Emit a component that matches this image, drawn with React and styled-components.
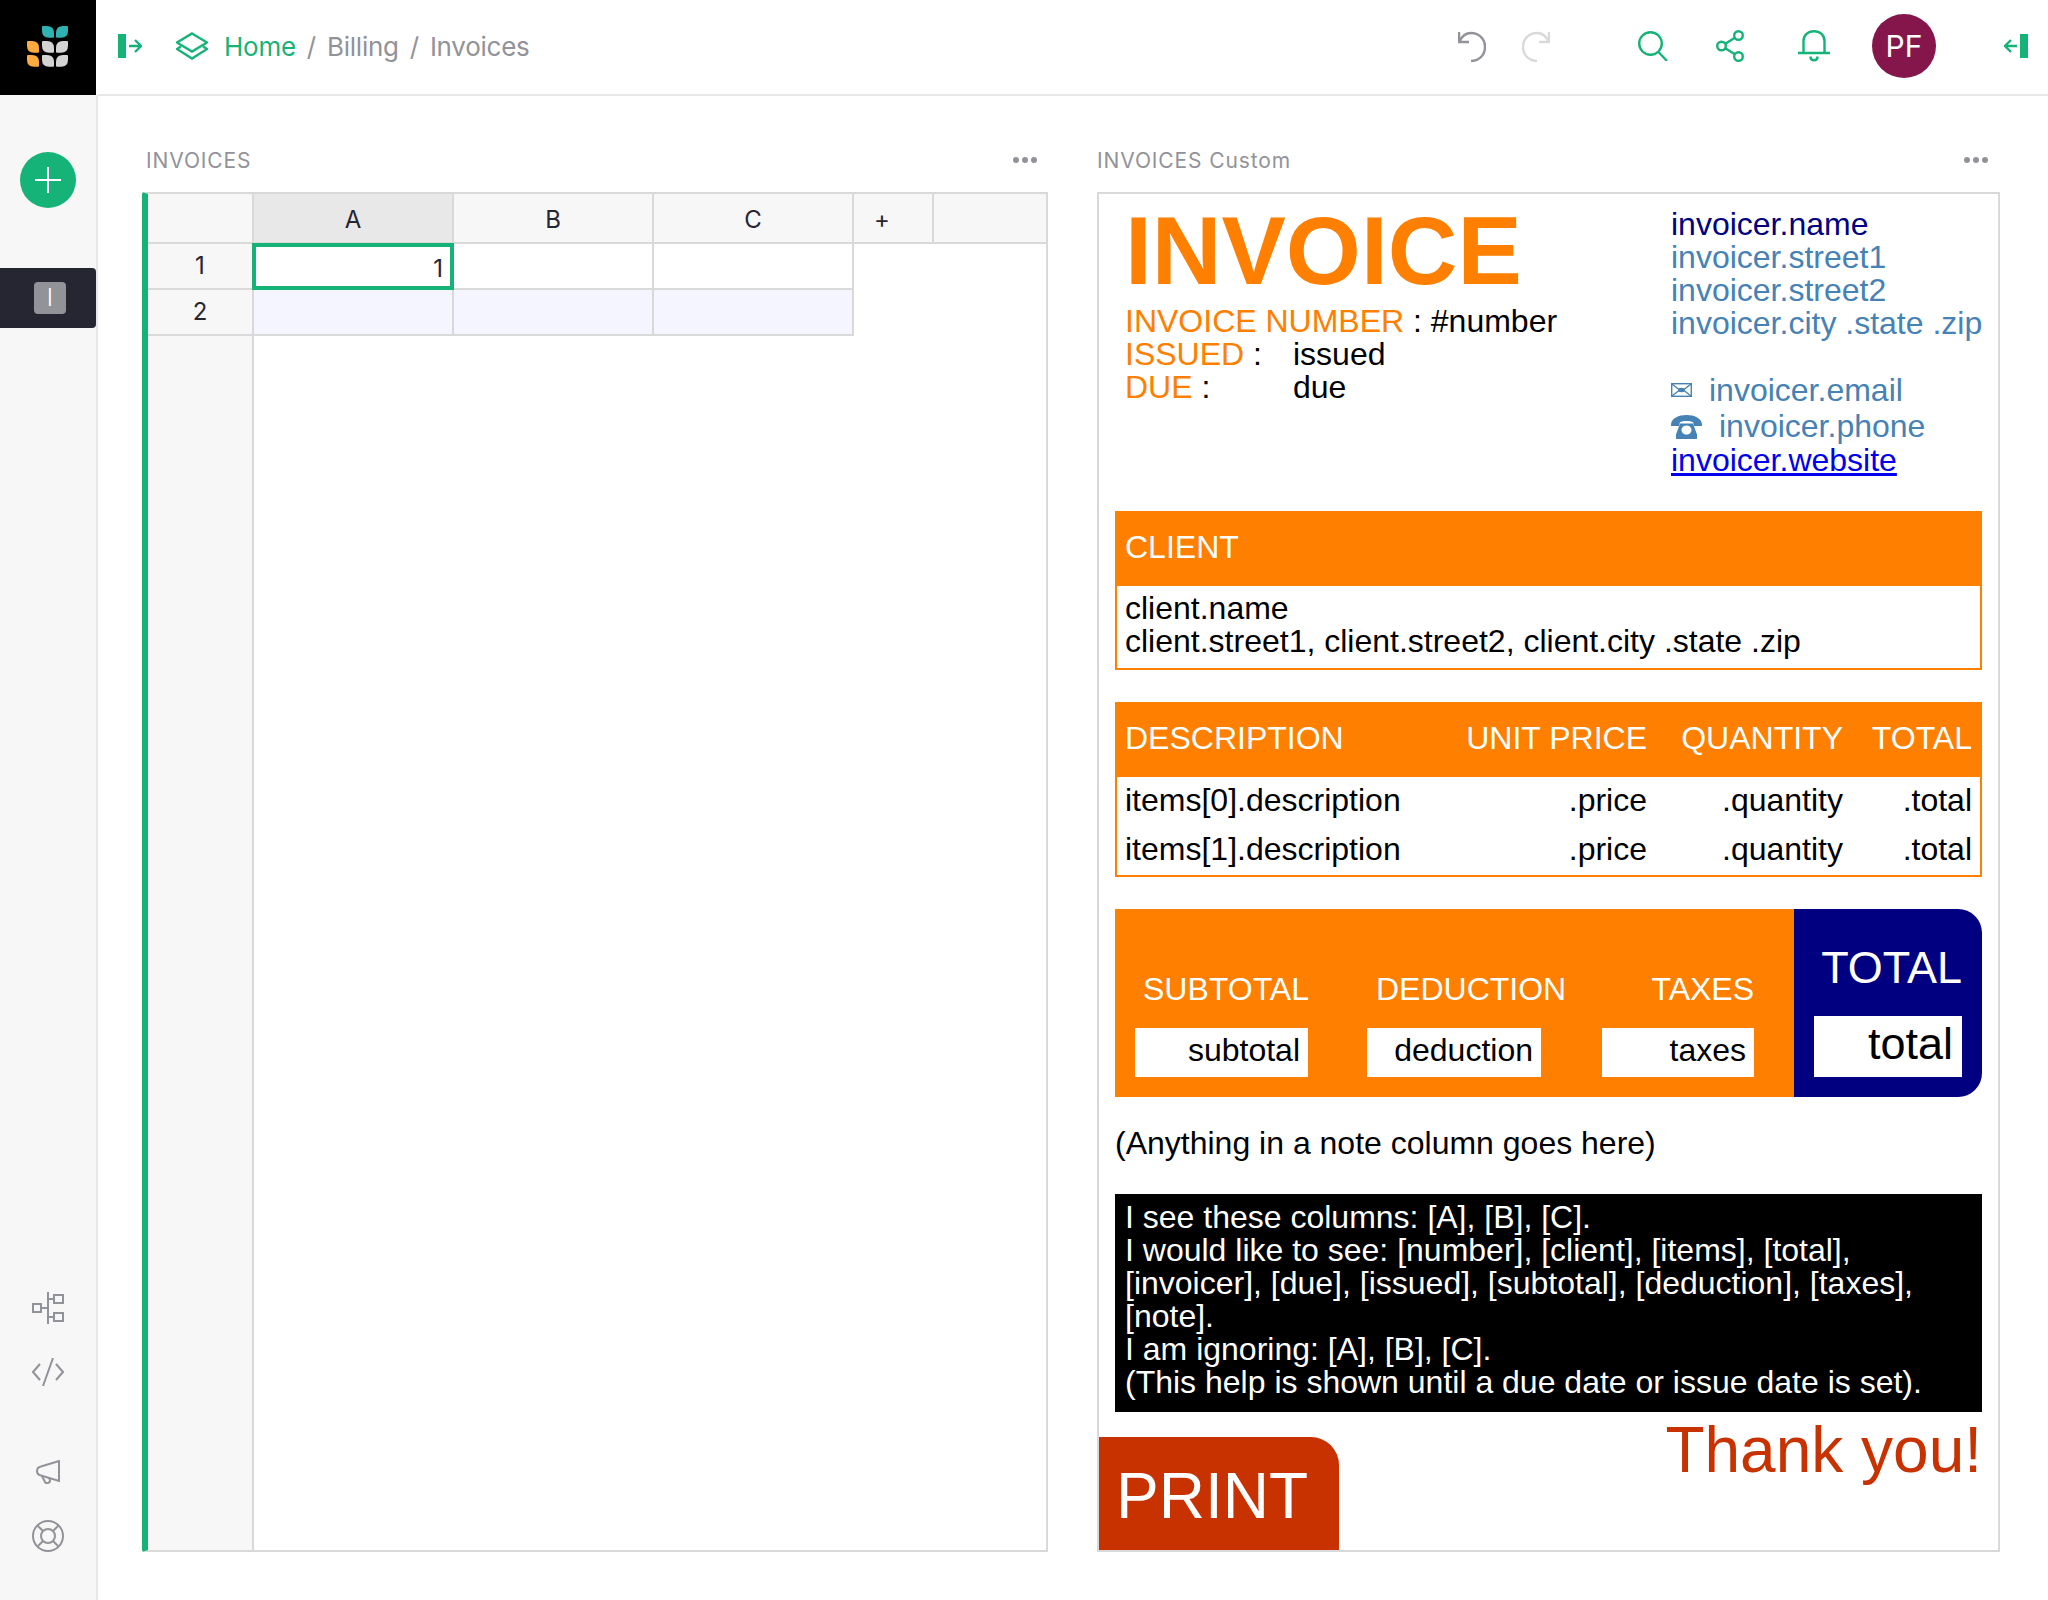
import React from 'react';
import styled, { createGlobalStyle } from 'styled-components';

const green = '#16b378';
const grey = '#929299';
const orange = '#ff7f00';
const red = '#c83200';

const Global = createGlobalStyle`
  html, body { margin: 0; padding: 0; background: #fff; }
  body { font-family: Inter, "Liberation Sans", sans-serif; }
  * { box-sizing: border-box; }
`;

const Page = styled.div`
  width: 2048px;
  height: 1600px;
  display: grid;
  grid-template-columns: 98px 1fr;
  grid-template-rows: 96px 1fr;
  overflow: hidden;
`;

const Logo = styled.div`
  width: 96px;
  height: 95px;
  background: #000;
  padding: 26px 0 0 27px;
`;

const TopBar = styled.header`
  display: flex;
  align-items: center;
  border-bottom: 2px solid #e8e8e8;
  padding: 0 20px 2px 20px;
`;

const Crumbs = styled.nav`
  display: flex;
  align-items: center;
  margin-left: 34px;
  font-size: 26px;
  letter-spacing: -0.25px;
  color: ${grey};
`;

const Home = styled.a`
  color: ${green};
  margin-left: 16px;
`;

const Slash = styled.span`
  margin: 0 11px;
`;

const Tools = styled.div`
  margin-left: auto;
  display: flex;
  align-items: center;
`;

const ToolIcon = styled.svg`
  display: block;
  flex: none;
  margin-left: ${p => p.$gap}px;
  fill: none;
  stroke: ${p => p.$color || green};
  stroke-width: 2.4;
`;

const Avatar = styled.div`
  width: 64px;
  height: 64px;
  margin-left: 42px;
  margin-right: 68px;
  border-radius: 50%;
  background: #85164b;
  color: #fff;
  font-size: 30px;
  display: flex;
  align-items: center;
  justify-content: center;
`;

const Sidebar = styled.aside`
  background: #f7f7f7;
  border-right: 2px solid #e8e8e8;
  margin-top: -1px;
  display: flex;
  flex-direction: column;
`;

const AddButton = styled.div`
  width: 56px;
  height: 56px;
  margin: 57px 0 0 20px;
  border-radius: 50%;
  background: ${green};
  display: flex;
  align-items: center;
  justify-content: center;
`;

const PageItem = styled.div`
  height: 60px;
  margin-top: 60px;
  background: #262633;
  border-radius: 0 4px 4px 0;
  display: flex;
  align-items: center;
  padding-left: 34px;
`;

const PageInitial = styled.div`
  width: 32px;
  height: 32px;
  border-radius: 4px;
  background: ${grey};
  color: #fff;
  font-size: 24px;
  font-weight: 300;
  line-height: 32px;
  text-align: center;
`;

const SideIcon = styled.svg`
  display: block;
  flex: none;
  margin-left: ${p => p.$left}px;
  margin-top: ${p => p.$top}px;
  fill: none;
  stroke: ${grey};
  stroke-width: 2;
`;

const SideBottom = styled.div`
  margin-top: auto;
  padding-bottom: 48px;
`;

const Main = styled.main`
  display: grid;
  grid-template-columns: 906px 903px;
  column-gap: 49px;
  padding: 0 0 0 44px;
`;

const Section = styled.section`
  display: flex;
  flex-direction: column;
`;

const SectionHead = styled.div`
  height: 96px;
  display: flex;
  align-items: center;
  justify-content: space-between;
  padding: 32px ${p => p.$right}px 0 ${p => p.$left}px;
  font-size: 21px;
  letter-spacing: 0.88px;
  color: ${grey};
`;

const Dots = styled.div`
  display: flex;
  gap: 3px;
  span {
    width: 6px;
    height: 6px;
    border-radius: 50%;
    background: ${grey};
  }
`;

const Sheet = styled.div`
  height: 1360px;
  border: 2px solid #d9d9d9;
  border-left: 6px solid ${green};
  border-radius: 2px 0 0 2px;
  position: relative;
  background: linear-gradient(to right, #f7f7f7 104px, #d9d9d9 104px, #d9d9d9 106px, #fff 106px);
  display: flex;
  flex-direction: column;
`;

const SheetRow = styled.div`
  display: grid;
  grid-template-columns: 106px 200px 200px 200px ${p => (p.$head ? '80px 1fr' : '')};
  height: ${p => (p.$head ? 50 : 46)}px;
  width: ${p => (p.$head ? 'auto' : '706px')};
`;

const Cell = styled.div`
  display: flex;
  align-items: center;
  justify-content: center;
  border-right: 2px solid #d9d9d9;
  border-bottom: 2px solid #d9d9d9;
  font-size: 24px;
  color: #262633;
  padding: ${p => p.$pad || '0'};
  background: ${p => p.$bg || 'transparent'};
`;

const ActiveCell = styled(Cell)`
  position: relative;
  justify-content: flex-end;
  padding: 4px 9px 0 0;
  background: #fff;
  &::after {
    content: '';
    position: absolute;
    inset: -1px -2px -2px -2px;
    border: 4px solid ${green};
  }
`;

const Invoice = styled.div`
  height: 1360px;
  border: 2px solid #d9d9d9;
  padding: 0 16px 0 16px;
  position: relative;
  font-family: "Liberation Sans", Arial, sans-serif;
  font-size: 32px;
  line-height: 33px;
  color: #000;
  display: flex;
  flex-direction: column;
`;

const InvoiceTop = styled.div`
  height: 317px;
  display: flex;
  justify-content: space-between;
`;

const TopLeft = styled.div`
  padding: 4px 0 0 10px;
`;

const BigTitle = styled.div`
  font-size: 96.500px;
  line-height: 106px;
  font-weight: 700;
  color: ${orange};
  margin-bottom: 1px;
`;

const Orange = styled.span`
  color: ${orange};
`;

const MetaRow = styled.div`
  display: grid;
  grid-template-columns: ${p => (p.$wide ? 'auto' : '168px auto')};
`;

const TopRight = styled.div`
  width: 311px;
  padding-top: 14px;
  white-space: nowrap;
  color: steelblue;
`;

const NavyLine = styled.div`
  color: #000080;
`;

const ContactGroup = styled.div`
  margin-top: 32px;
`;

const ContactLine = styled.div`
  display: flex;
  align-items: center;
  height: ${p => p.$h}px;
  padding-top: ${p => p.$top || 0}px;
`;

const ContactIcon = styled.svg`
  display: block;
  flex: none;
  margin-right: ${p => p.$gap}px;
`;

const Website = styled.a`
  color: #0000ee;
  text-decoration: underline;
`;

const itemCols = '1fr 200px 196px 129px';

const BandHead = styled.div`
  height: 75px;
  background: ${orange};
  color: #fff;
  display: grid;
  align-items: center;
  grid-template-columns: ${p => p.$cols || '1fr'};
  padding: 0 10px 2px 10px;
  text-align: ${p => (p.$cols ? 'right' : 'left')};
  white-space: nowrap;
  & > :first-child { text-align: left; }
`;

const BandBody = styled.div`
  border: 2px solid ${orange};
  border-top: 0;
  padding: ${p => p.$top || 0}px 8px 0 8px;
  height: ${p => p.$h}px;
`;

const ItemRow = styled.div`
  display: grid;
  align-items: center;
  height: 49px;
  padding-bottom: 3px;
  grid-template-columns: ${itemCols};
  text-align: right;
  & > :first-child { text-align: left; }
`;

const Block = styled.div`
  margin-top: ${p => p.$top}px;
`;

const Totals = styled.div`
  margin-top: 32px;
  height: 188px;
  display: flex;
`;

const TotalsLeft = styled.div`
  width: 679px;
  background: ${orange};
  display: flex;
  padding-top: 64px;
`;

const TotalCol = styled.div`
  margin-left: ${p => p.$left}px;
  width: ${p => p.$w}px;
  text-align: ${p => p.$align || 'left'};
  color: #fff;
  white-space: nowrap;
`;

const TotalValue = styled.div`
  margin-top: 22px;
  margin-left: ${p => p.$shift || 0}px;
  width: ${p => p.$w}px;
  height: 49px;
  background: #fff;
  color: #000;
  text-align: right;
  padding: 6px 8px 0 0;
`;

const GrandTotal = styled.div`
  flex: 1;
  background: #000080;
  border-radius: 0 24px 24px 0;
  padding: 33px 20px 0 20px;
  color: #fff;
  font-size: 45px;
  line-height: 52px;
  text-align: right;
`;

const GrandValue = styled.div`
  margin-top: 22px;
  height: 61px;
  padding: 2px 9px 0 0;
  background: #fff;
  color: #000;
`;

const Help = styled.div`
  margin-top: 34px;
  height: 218px;
  padding: 7px 10px 0 10px;
  background: #000;
  color: #fff;
`;

const Bottom = styled.div`
  flex: 1;
  display: flex;
  justify-content: space-between;
  margin: 0 0 0 -16px;
`;

const Print = styled.div`
  align-self: flex-end;
  width: 240px;
  height: 113px;
  background: ${red};
  color: #fff;
  border-radius: 0 28px 0 0;
  font-size: 64px;
  line-height: 64px;
  padding: 27px 0 0 17px;
`;

const Thanks = styled.div`
  color: ${red};
  font-size: 64px;
  line-height: 72px;
  margin-top: 2px;
`;

// rounded rect with a separate radius per corner
const leaf = (x, y, w, h, [tl, tr, br, bl]) =>
  `M${x + tl} ${y}H${x + w - tr}Q${x + w} ${y} ${x + w} ${y + tr}V${y + h - br}Q${x + w} ${y + h} ${x + w - br} ${y + h}H${x + bl}Q${x} ${y + h} ${x} ${y + h - bl}V${y + tl}Q${x} ${y} ${x + tl} ${y}Z`;

const toRight = [1, 7, 1, 7];
const toLeft = [7, 1, 7, 1];

const leaves = [
  [15, 0, '#2fb2b2', toRight],
  [29, 0, '#2fb2b2', toLeft],
  [0, 15, '#ffab40', toRight],
  [15, 15, '#d4d4d4', toRight],
  [29, 15, '#d4d4d4', toLeft],
  [0, 29, '#ffab40', toRight],
  [15, 29, '#d4d4d4', toRight],
  [29, 29, '#d4d4d4', toLeft],
];

const GristLogo = () => (
  <svg width="42" height="41" viewBox="0 0 42 41" style={{ display: 'block' }}>
    {leaves.map(([x, y, fill, r]) => <path key={`${x}-${y}`} fill={fill} d={leaf(x, y, 12, 11.7, r)} />)}
  </svg>
);

const PanelIcon = ({ flip, gap }) => (
  <ToolIcon $gap={gap} width="24" height="24" viewBox="0 0 24 24" style={flip ? { transform: 'scaleX(-1)' } : undefined}>
    <rect x="0" y="0" width="8" height="24" fill={green} stroke="none" />
    <path d="M11 12h12M17 6l6 6-6 6" />
  </ToolIcon>
);

const cols = ['A', 'B', 'C'];

export default function App() {
  return (
    <Page>
      <Global />
      <Logo><GristLogo /></Logo>
      <TopBar>
        <PanelIcon gap={0} />
        <Crumbs>
          <ToolIcon $gap={0} width="32" height="28" viewBox="0 0 32 28">
            <path d="M16 1.500 31 10.500 16 19.500 1 10.500z" />
            <path d="M5 14.500 1 17 16 26.500 31 17 27 14.500" />
          </ToolIcon>
          <Home>Home</Home>
          <Slash>/</Slash>
          <span>Billing</span>
          <Slash>/</Slash>
          <span>Invoices</span>
        </Crumbs>
        <Tools>
          <ToolIcon $color={grey} width="28" height="32" viewBox="0 0 28 32">
            <path d="M1 2v10h10M1.500 11.500C4 6 8 3 13 3c7 0 14 5 14 14s-7 14-14 14" />
          </ToolIcon>
          <ToolIcon $gap={36} $color="#d9d9d9" width="28" height="32" viewBox="0 0 28 32">
            <path d="M27 2v10H17M26.500 11.500C24 6 20 3 15 3 8 3 1 8 1 17s7 14 14 14" />
          </ToolIcon>
          <ToolIcon $gap={88} width="30" height="30" viewBox="0 0 30 30">
            <circle cx="12.500" cy="12.500" r="11.300" />
            <path d="M20.500 21 29 30" />
          </ToolIcon>
          <ToolIcon $gap={48} width="28" height="32" viewBox="0 0 28 32">
            <circle cx="5.500" cy="16" r="4.300" />
            <circle cx="22.500" cy="5.500" r="4.300" />
            <circle cx="22.500" cy="26.500" r="4.300" />
            <path d="M9.300 13.800 18.800 7.700M9.300 18.200 18.800 24.300" />
          </ToolIcon>
          <ToolIcon $gap={54} width="32" height="32" viewBox="0 0 32 32">
            <path d="M0 23h32M5.500 23V11C5.500 5 10 1.200 16 1.200S26.500 5 26.500 11v12" />
            <path d="M12.500 26.500c0 5 7 5 7 0" />
          </ToolIcon>
          <Avatar>PF</Avatar>
          <PanelIcon flip gap={0} />
        </Tools>
      </TopBar>

      <Sidebar>
        <AddButton>
          <svg width="26" height="26" viewBox="0 0 26 26" fill="none" stroke="#fff" strokeWidth="2">
            <path d="M13 0v26M0 13h26" />
          </svg>
        </AddButton>
        <PageItem><PageInitial>I</PageInitial></PageItem>
        <SideBottom>
          <SideIcon $left={32} width="32" height="32" viewBox="0 0 32 32">
            <rect x="1" y="12" width="8" height="8" />
            <rect x="22" y="3" width="9" height="8" />
            <rect x="22" y="21" width="9" height="8" />
            <path d="M16 0v32M9 16h7M16 7h6M16 25h6" />
          </SideIcon>
          <SideIcon $left={32} $top={34} width="32" height="28" viewBox="0 0 32 28">
            <path d="M8 6 1 14l7 8M24 6l7 8-7 8M21 0 11 28" />
          </SideIcon>
          <SideIcon $left={36} $top={74} width="24" height="24" viewBox="0 0 24 24">
            <path d="M23 1v20L5 15.500C2.500 15 1 13 1 11s1.500-4 4-4.500z" />
            <path d="M6 16l3 6c1 2 5 1 5-1.500l-1-3" />
          </SideIcon>
          <SideIcon $left={32} $top={36} width="32" height="32" viewBox="0 0 32 32">
            <circle cx="16" cy="16" r="15" />
            <circle cx="16" cy="16" r="7" />
            <path d="M5.500 5.500l5.500 5.500M26.500 5.500 21 11M5.500 26.500 11 21M26.500 26.500 21 21" />
          </SideIcon>
        </SideBottom>
      </Sidebar>

      <Main>
        <Section>
          <SectionHead $left={4} $right={11}>
            <span>INVOICES</span>
            <Dots><span /><span /><span /></Dots>
          </SectionHead>
          <Sheet>
            <SheetRow $head>
              <Cell $bg="#f7f7f7" />
              <Cell $bg="#e8e8e8" $pad="2px 0 0">A</Cell>
              <Cell $bg="#f7f7f7" $pad="2px 0 0">B</Cell>
              <Cell $bg="#f7f7f7" $pad="2px 0 0">C</Cell>
              <Cell $bg="#f7f7f7" $pad="2px 22px 0 0">+</Cell>
              <Cell $bg="#f7f7f7" style={{ borderRight: 0 }} />
            </SheetRow>
            <SheetRow>
              <Cell $bg="#f7f7f7" $pad="0 0 2px">1</Cell>
              <ActiveCell>1</ActiveCell>
              <Cell />
              <Cell />
            </SheetRow>
            <SheetRow>
              <Cell $bg="#f7f7f7" $pad="0 0 2px">2</Cell>
              {cols.map(c => <Cell key={c} $bg="#f4f5fe" />)}
            </SheetRow>
          </Sheet>
        </Section>

        <Section>
          <SectionHead $left={0} $right={12}>
            <span>INVOICES Custom</span>
            <Dots><span /><span /><span /></Dots>
          </SectionHead>
          <Invoice>
            <InvoiceTop>
              <TopLeft>
                <BigTitle>INVOICE</BigTitle>
                <MetaRow $wide><span><Orange>INVOICE NUMBER</Orange> : #number</span></MetaRow>
                <MetaRow><span><Orange>ISSUED</Orange> :</span><span>issued</span></MetaRow>
                <MetaRow><span><Orange>DUE</Orange> :</span><span>due</span></MetaRow>
              </TopLeft>
              <TopRight>
                <NavyLine>invoicer.name</NavyLine>
                <div>invoicer.street1</div>
                <div>invoicer.street2</div>
                <div>invoicer.city .state .zip</div>
                <ContactGroup>
                  <ContactLine $h={36}>
                    <ContactIcon $gap={17} width="21" height="14" viewBox="0 0 21 14" fill="none" stroke="steelblue" strokeWidth="1.4">
                      <rect x="0.700" y="0.700" width="19.600" height="12.600" />
                      <path d="M1 1l7 5.500M20 1l-7 5.500M1 13l7-5.500M20 13l-7-5.500" />
                      <ellipse cx="10.500" cy="7" rx="3.500" ry="2.200" fill="steelblue" stroke="none" />
                    </ContactIcon>
                    invoicer.email
                  </ContactLine>
                  <ContactLine $h={36} $top={1}>
                    <ContactIcon $gap={17} width="31" height="24" viewBox="0 0 31 24">
                      <path fill="steelblue" d="M0 10C0 3 8 0 15.500 0S31 3 31 10v1h-8l-1-4c-3-1.500-10-1.500-13 0l-1 4H0z" />
                      <path fill="steelblue" fillRule="evenodd" d="M9 8.500h13l4 11V24H5v-4.500zM15.500 10.500a5 4.500 0 1 0 .01 0z" />
                    </ContactIcon>
                    invoicer.phone
                  </ContactLine>
                  <Website>invoicer.website</Website>
                </ContactGroup>
              </TopRight>
            </InvoiceTop>

            <BandHead>CLIENT</BandHead>
            <BandBody $h={84} $top={6}>
              <div>client.name</div>
              <div>client.street1, client.street2, client.city .state .zip</div>
            </BandBody>

            <Block $top={32}>
              <BandHead $cols={itemCols}>
                <span>DESCRIPTION</span>
                <span>UNIT PRICE</span>
                <span>QUANTITY</span>
                <span>TOTAL</span>
              </BandHead>
              <BandBody $h={100}>
                <ItemRow>
                  <span>items[0].description</span><span>.price</span><span>.quantity</span><span>.total</span>
                </ItemRow>
                <ItemRow>
                  <span>items[1].description</span><span>.price</span><span>.quantity</span><span>.total</span>
                </ItemRow>
              </BandBody>
            </Block>

            <Totals>
              <TotalsLeft>
                <TotalCol $left={28} $w={165}>SUBTOTAL<TotalValue $shift={-8} $w={173}>subtotal</TotalValue></TotalCol>
                <TotalCol $left={68} $w={190}>DEDUCTION<TotalValue $shift={-9} $w={174}>deduction</TotalValue></TotalCol>
                <TotalCol $left={36} $w={152} $align="right">TAXES<TotalValue $w={152}>taxes</TotalValue></TotalCol>
              </TotalsLeft>
              <GrandTotal>TOTAL<GrandValue>total</GrandValue></GrandTotal>
            </Totals>

            <Block $top={30}>(Anything in a note column goes here)</Block>

            <Help>
              <div>I see these columns: [A], [B], [C].</div>
              <div>I would like to see: [number], [client], [items], [total], [invoicer], [due], [issued], [subtotal], [deduction], [taxes], [note].</div>
              <div>I am ignoring: [A], [B], [C].</div>
              <div>(This help is shown until a due date or issue date is set).</div>
            </Help>

            <Bottom>
              <Print>PRINT</Print>
              <Thanks>Thank you!</Thanks>
            </Bottom>
          </Invoice>
        </Section>
      </Main>
    </Page>
  );
}
